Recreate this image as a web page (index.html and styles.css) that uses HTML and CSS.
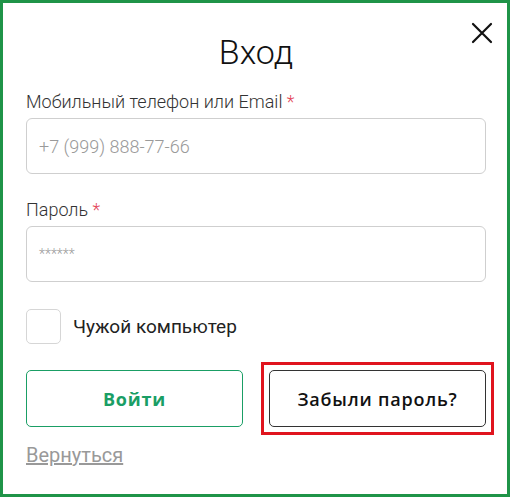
FILE: index.html
```html
<!DOCTYPE html>
<html lang="ru">
<head>
<meta charset="utf-8">
<link rel="stylesheet" href="styles.css">
</head>
<body>
<div class="frame">
  <div class="head">
    <h1 class="title">Вход</h1>
    <button class="close" aria-label="Закрыть">
      <svg width="22" height="22" viewBox="0 0 22 22"><path d="M2 2L20 20M20 2L2 20" stroke="#111" stroke-width="2.2" stroke-linecap="round"/></svg>
    </button>
  </div>
  <div class="field">
    <label class="label">Мобильный телефон или Email <span class="req">*</span></label>
    <div class="input"><span class="ph">+7 (999) 888-77-66</span></div>
  </div>
  <div class="field">
    <label class="label">Пароль <span class="req">*</span></label>
    <div class="input"><span class="ph stars">******</span></div>
  </div>
  <div class="check">
    <span class="box"></span>
    <span class="check-text">Чужой компьютер</span>
  </div>
  <div class="actions">
    <button class="btn btn-green">Войти</button>
    <div class="highlight"><button class="btn btn-dark">Забыли пароль?</button></div>
  </div>
  <a class="back">Вернуться</a>
</div>
</body>
</html>
```
FILE: styles.css
```css
html, body { margin: 0; padding: 0; background: #fff; }
body { font-family: Roboto, "Noto Sans", sans-serif; }
.frame {
  box-sizing: border-box;
  width: 510px;
  height: 497px;
  border: 3px solid #1f9448;
  padding: 0 21px 0 23px;
  display: flex;
  flex-direction: column;
}
.head {
  position: relative;
  height: 89px;
  display: flex;
  justify-content: center;
}
.title {
  margin: 31px 0 0;
  font-size: 34px;
  font-weight: 300;
  line-height: 36px;
  color: #111;
}
.close {
  position: absolute;
  right: -7px;
  top: 19px;
  border: 0;
  background: none;
  padding: 0;
  width: 22px;
  height: 22px;
}
.field { display: flex; flex-direction: column; }
.label {
  font-size: 18px;
  line-height: 20px;
  color: #333;
  font-weight: 300;
  margin-bottom: 6px;
}
.req { color: #e3465a; }
.input {
  box-sizing: border-box;
  height: 56px;
  border: 1px solid #cfcfcf;
  border-radius: 6px;
  display: flex;
  align-items: center;
  padding: 0 12px;
  margin-bottom: 26px;
}
.ph { color: #9a9a9a; font-size: 18px; font-weight: 300; }
.stars { font-size: 14px; }
.check {
  display: flex;
  align-items: center;
  gap: 12px;
  margin-top: 1px;
}
.box {
  box-sizing: border-box;
  width: 35px;
  height: 35px;
  border: 1px solid #d6d6d6;
  border-radius: 5px;
}
.check-text { font-size: 19px; color: #222; }
.actions {
  display: grid;
  grid-template-columns: 1fr 1fr;
  gap: 26px;
  margin-top: 26px;
}
.highlight {
  margin: -8px;
  padding: 5px;
  border: 3px solid #e0141e;
  display: flex;
}
.btn {
  box-sizing: border-box;
  width: 100%;
  height: 57px;
  background: #fff;
  border-radius: 5px;
  font-family: "Open Sans", sans-serif;
  font-size: 18px;
  font-weight: 700;
  letter-spacing: 0.8px;
}
.btn-green { border: 1px solid #1a9e65; color: #1a9e65; }
.btn-dark {
  border: 1px solid #333;
  color: #111;
  font-weight: 600;
}
.back {
  margin-top: 16px;
  font-size: 20px;
  line-height: 24px;
  color: #999;
  text-decoration: underline;
  align-self: flex-start;
}
```
